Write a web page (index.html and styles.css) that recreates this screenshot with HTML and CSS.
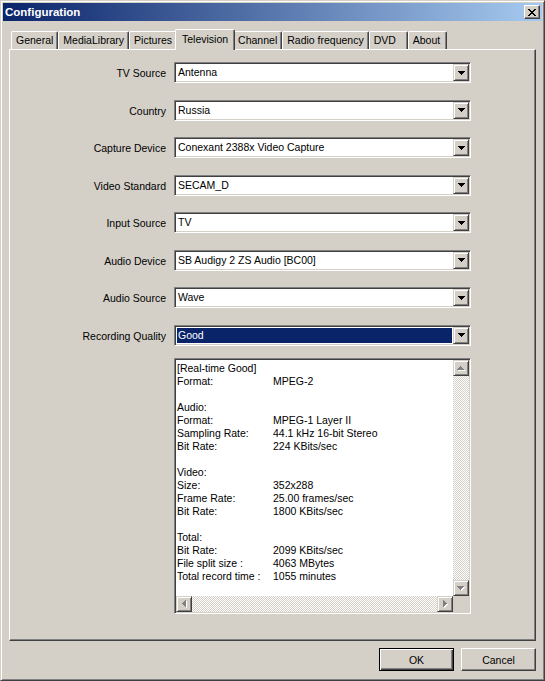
FILE: index.html
```html
<!DOCTYPE html>
<html>
<head>
<meta charset="utf-8">
<link rel="stylesheet" href="styles.css">
</head>
<body>
<div class="window">
  <div class="titlebar">
    <span class="title">Configuration</span>
    <span class="close"><svg width="8" height="7" viewBox="0 0 8 7"><path d="M0 0h2v1H0zM6 0h2v1H6zM1 1h2v1H1zM5 1h2v1H5zM2 2h4v1H2zM3 3h2v1H3zM2 4h4v1H2zM1 5h2v1H1zM5 5h2v1H5zM0 6h2v1H0zM6 6h2v1H6z" fill="#000"/></svg></span>
  </div>
  <div class="tabs">
    <div class="tab">General</div>
    <div class="tab">MediaLibrary</div>
    <div class="tab">Pictures</div>
    <div class="tab active">Television</div>
    <div class="tab">Channel</div>
    <div class="tab">Radio frequency</div>
    <div class="tab">DVD</div>
    <div class="tab">About</div>
  </div>
  <div class="panel">
    <div class="form">
      <div class="lbl">TV Source</div>
      <div class="combo"><span class="val">Antenna</span><span class="dd"><svg width="7" height="4" viewBox="0 0 7 4"><path d="M0 0h7v1H0zM1 1h5v1H1zM2 2h3v1H2zM3 3h1v1H3z"/></svg></span></div>
      <div class="lbl">Country</div>
      <div class="combo"><span class="val">Russia</span><span class="dd"><svg width="7" height="4" viewBox="0 0 7 4"><path d="M0 0h7v1H0zM1 1h5v1H1zM2 2h3v1H2zM3 3h1v1H3z"/></svg></span></div>
      <div class="lbl">Capture Device</div>
      <div class="combo"><span class="val">Conexant 2388x Video Capture</span><span class="dd"><svg width="7" height="4" viewBox="0 0 7 4"><path d="M0 0h7v1H0zM1 1h5v1H1zM2 2h3v1H2zM3 3h1v1H3z"/></svg></span></div>
      <div class="lbl">Video Standard</div>
      <div class="combo"><span class="val">SECAM_D</span><span class="dd"><svg width="7" height="4" viewBox="0 0 7 4"><path d="M0 0h7v1H0zM1 1h5v1H1zM2 2h3v1H2zM3 3h1v1H3z"/></svg></span></div>
      <div class="lbl">Input Source</div>
      <div class="combo"><span class="val">TV</span><span class="dd"><svg width="7" height="4" viewBox="0 0 7 4"><path d="M0 0h7v1H0zM1 1h5v1H1zM2 2h3v1H2zM3 3h1v1H3z"/></svg></span></div>
      <div class="lbl">Audio Device</div>
      <div class="combo"><span class="val">SB Audigy 2 ZS Audio [BC00]</span><span class="dd"><svg width="7" height="4" viewBox="0 0 7 4"><path d="M0 0h7v1H0zM1 1h5v1H1zM2 2h3v1H2zM3 3h1v1H3z"/></svg></span></div>
      <div class="lbl">Audio Source</div>
      <div class="combo"><span class="val">Wave</span><span class="dd"><svg width="7" height="4" viewBox="0 0 7 4"><path d="M0 0h7v1H0zM1 1h5v1H1zM2 2h3v1H2zM3 3h1v1H3z"/></svg></span></div>
      <div class="lbl">Recording Quality</div>
      <div class="combo"><span class="val sel">Good</span><span class="dd"><svg width="7" height="4" viewBox="0 0 7 4"><path d="M0 0h7v1H0zM1 1h5v1H1zM2 2h3v1H2zM3 3h1v1H3z"/></svg></span></div>
      <div class="spacer"></div>
      <div class="memo">
        <div class="memo-text">
          <div class="line">[Real-time Good]</div>
          <div class="kv"><span>Format:</span><span>MPEG-2</span></div>
          <div class="line"></div>
          <div class="line">Audio:</div>
          <div class="kv"><span>Format:</span><span>MPEG-1 Layer II</span></div>
          <div class="kv"><span>Sampling Rate:</span><span>44.1 kHz 16-bit Stereo</span></div>
          <div class="kv"><span>Bit Rate:</span><span>224 KBits/sec</span></div>
          <div class="line"></div>
          <div class="line">Video:</div>
          <div class="kv"><span>Size:</span><span>352x288</span></div>
          <div class="kv"><span>Frame Rate:</span><span>25.00 frames/sec</span></div>
          <div class="kv"><span>Bit Rate:</span><span>1800 KBits/sec</span></div>
          <div class="line"></div>
          <div class="line">Total:</div>
          <div class="kv"><span>Bit Rate:</span><span>2099 KBits/sec</span></div>
          <div class="kv"><span>File split size :</span><span>4063 MBytes</span></div>
          <div class="kv"><span>Total record time :</span><span>1055 minutes</span></div>
        </div>
        <div class="vscroll">
          <span class="sbtn"><svg width="8" height="5" viewBox="0 0 8 5"><path fill="#fff" d="M4 1h1v1H4zM3 2h3v1H3zM2 3h5v1H2zM1 4h7v1H1z"/><path fill="#808080" d="M3 0h1v1H3zM2 1h3v1H2zM1 2h5v1H1zM0 3h7v1H0z"/></svg></span>
          <span class="track"></span>
          <span class="sbtn"><svg width="8" height="5" viewBox="0 0 8 5"><path fill="#fff" d="M1 1h7v1H1zM2 2h5v1H2zM3 3h3v1H3zM4 4h1v1H4z"/><path fill="#808080" d="M0 0h7v1H0zM1 1h5v1H1zM2 2h3v1H2zM3 3h1v1H3z"/></svg></span>
        </div>
        <div class="hscroll">
          <span class="sbtn"><svg width="5" height="8" viewBox="0 0 5 8"><path fill="#fff" d="M1 4h1v1H1zM2 3h1v3H2zM3 2h1v5H3zM4 1h1v7H4z"/><path fill="#808080" d="M0 3h1v1H0zM1 2h1v3H1zM2 1h1v5H2zM3 0h1v7H3z"/></svg></span>
          <span class="track"></span>
          <span class="sbtn"><svg width="5" height="8" viewBox="0 0 5 8"><path fill="#fff" d="M1 1h1v7H1zM2 2h1v5H2zM3 3h1v3H3zM4 4h1v1H4z"/><path fill="#808080" d="M0 0h1v7H0zM1 1h1v5H1zM2 2h1v3H2zM3 3h1v1H3z"/></svg></span>
        </div>
        <div class="corner"></div>
      </div>
    </div>
  </div>
  <div class="buttons">
    <button class="btn default">OK</button>
    <button class="btn">Cancel</button>
  </div>
</div>
</body>
</html>
```

FILE: styles.css
```css
html, body {
  margin: 0;
  padding: 0;
  background: #d4d0c8;
}
body {
  font-family: "Liberation Sans", Arial, sans-serif;
  font-size: 10.5px;
  color: #000;
}
.window {
  width: 545px;
  height: 681px;
  box-sizing: border-box;
  border: 1px solid;
  border-color: #d4d0c8 #404040 #404040 #d4d0c8;
  box-shadow: inset 1px 1px #fff, inset -1px -1px #808080;
  padding: 2px;
  display: flex;
  flex-direction: column;
  background: #d4d0c8;
}
.titlebar {
  height: 18px;
  display: flex;
  align-items: center;
  justify-content: space-between;
  padding: 0 2px 0 2px;
  background: linear-gradient(to right, #0a246a, #a6caf0);
}
.title {
  color: #fff;
  font-weight: bold;
  font-size: 11.5px;
}
.close {
  width: 16px;
  height: 14px;
  box-sizing: border-box;
  border: 1px solid;
  border-color: #fff #404040 #404040 #fff;
  box-shadow: inset -1px -1px #808080;
  background: #d4d0c8;
  display: flex;
  align-items: center;
  justify-content: center;
}
.close svg { display: block; }
.tabs {
  display: flex;
  align-items: flex-end;
  height: 20px;
  margin: 8px 0 0 8px;
  position: relative;
  z-index: 1;
}
.tab {
  height: 18px;
  box-sizing: border-box;
  min-width: 39px;
  padding: 1px 4px 0 4px;
  line-height: 15px;
  border-top: 1px solid #fff;
  border-left: 1px solid #fff;
  border-right: 1px solid #404040;
  box-shadow: inset -1px 0 #808080;
  border-radius: 2px 2px 0 0;
  background: #d4d0c8;
  white-space: nowrap;
}
.tab.active {
  height: 21px;
  margin: 0 -2px -1px -2px;
  padding: 1px 6px 0 6px;
  line-height: 16px;
  position: relative;
  z-index: 2;
}
.panel {
  flex: 1;
  margin: 0 6px;
  border: 1px solid;
  border-color: #fff #404040 #404040 #fff;
  box-shadow: inset -1px -1px #808080;
}
.form {
  display: grid;
  grid-template-columns: 156px 297px;
  grid-auto-rows: 21px;
  column-gap: 8px;
  row-gap: 16.5px;
  padding-top: 12px;
}
.lbl {
  text-align: right;
  line-height: 21px;
  padding-top: 1px;
  white-space: nowrap;
}
.combo {
  display: flex;
  height: 21px;
  box-sizing: border-box;
  border: 1px solid;
  border-color: #808080 #fff #fff #808080;
  box-shadow: inset 1px 1px #404040, inset -1px -1px #d4d0c8;
  background: #fff;
  padding: 1px;
}
.val {
  flex: 1;
  padding-left: 2px;
  line-height: 17px;
  white-space: nowrap;
}
.val.sel {
  background: #0a246a;
  color: #fff;
  margin: 1px 1px 1px 1px;
  line-height: 15px;
  padding-left: 1px;
}
.dd {
  width: 16px;
  height: 17px;
  box-sizing: border-box;
  border: 1px solid;
  border-color: #d4d0c8 #404040 #404040 #d4d0c8;
  box-shadow: inset 1px 1px #fff, inset -1px -1px #808080;
  background: #d4d0c8;
  display: flex;
  align-items: center;
  justify-content: center;
}
.dd svg { display: block; }
.memo {
  height: 256px;
  margin-top: -4px;
  box-sizing: border-box;
  border: 1px solid;
  border-color: #808080 #fff #fff #808080;
  box-shadow: inset 1px 1px #404040, inset -1px -1px #d4d0c8;
  background: #fff;
  padding: 1px;
  display: grid;
  grid-template-columns: 1fr 16px;
  grid-template-rows: 1fr 16px;
}
.memo-text {
  padding: 2px 0 0 1px;
  overflow: hidden;
  line-height: 13px;
}
.line { height: 13px; white-space: nowrap; }
.kv {
  display: grid;
  grid-template-columns: 96px auto;
  height: 13px;
  white-space: nowrap;
}
.vscroll {
  display: flex;
  flex-direction: column;
}
.hscroll {
  display: flex;
}
.sbtn {
  width: 16px;
  height: 16px;
  flex: none;
  box-sizing: border-box;
  border: 1px solid;
  border-color: #d4d0c8 #404040 #404040 #d4d0c8;
  box-shadow: inset 1px 1px #fff, inset -1px -1px #808080;
  background: #d4d0c8;
  display: flex;
  align-items: center;
  justify-content: center;
}
.sbtn svg { display: block; }
.track {
  flex: 1;
  background: repeating-conic-gradient(#d4d0c8 0 25%, #fff 0 50%) 0 0 / 2px 2px;
}
.corner { background: #d4d0c8; }
.buttons {
  display: flex;
  justify-content: flex-end;
  gap: 7px;
  margin: 7px 6px 7px 0;
}
.btn {
  width: 75px;
  height: 23px;
  box-sizing: border-box;
  font: inherit;
  color: #000;
  background: #d4d0c8;
  border: 1px solid;
  border-color: #fff #404040 #404040 #fff;
  box-shadow: inset -1px -1px #808080;
  padding: 0;
  margin: 0;
}
.btn.default {
  border-color: #000;
  box-shadow: inset 1px 1px #fff, inset -1px -1px #404040, inset -2px -2px #808080;
}
```
